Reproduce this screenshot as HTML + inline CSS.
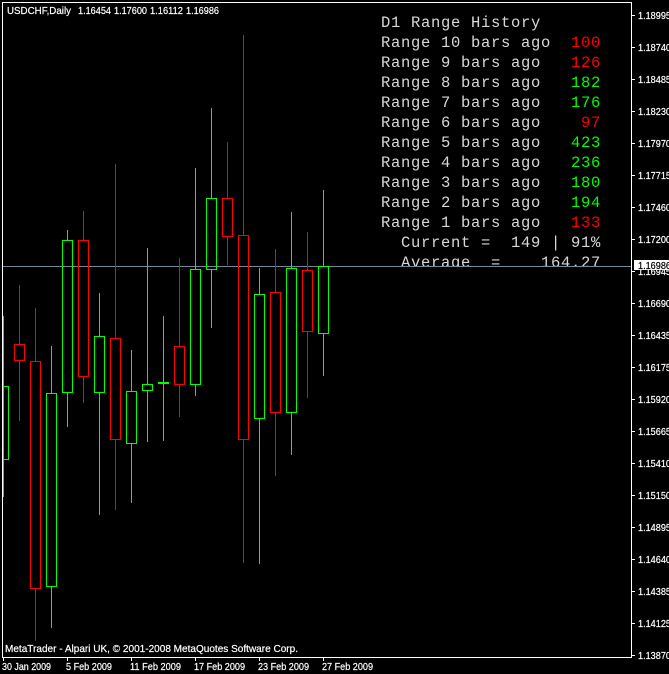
<!DOCTYPE html>
<html>
<head>
<meta charset="utf-8">
<style>
html,body{margin:0;padding:0;background:#000;width:669px;height:674px;overflow:hidden}
svg{display:block}
.s{font-family:"Liberation Sans",sans-serif;font-size:10.5px;fill:#fff;stroke:#fff;stroke-width:.2}
.m{font-family:"Liberation Mono",monospace;font-size:15.5px;letter-spacing:.7px;white-space:pre}
.o{fill:#d8d8d8}.r{fill:#ff0000}.g{fill:#00ff00}
</style>
</head>
<body>
<svg width="669" height="674" viewBox="0 0 669 674" xmlns="http://www.w3.org/2000/svg">
<defs><clipPath id="c"><rect x="0" y="0" width="631" height="266"/></clipPath></defs>
<rect width="669" height="674" fill="#000"/>

<!-- overlay text -->
<g class="m" clip-path="url(#c)">
<text class="m o" x="381" y="27" xml:space="preserve">D1 Range History</text>
<text class="m o" x="381" y="47" xml:space="preserve">Range 10 bars ago</text><text class="m r" x="571" y="47">100</text>
<text class="m o" x="381" y="67" xml:space="preserve">Range 9 bars ago</text><text class="m r" x="571" y="67">126</text>
<text class="m o" x="381" y="87" xml:space="preserve">Range 8 bars ago</text><text class="m g" x="571" y="87">182</text>
<text class="m o" x="381" y="107" xml:space="preserve">Range 7 bars ago</text><text class="m g" x="571" y="107">176</text>
<text class="m o" x="381" y="127" xml:space="preserve">Range 6 bars ago</text><text class="m r" x="581" y="127">97</text>
<text class="m o" x="381" y="147" xml:space="preserve">Range 5 bars ago</text><text class="m g" x="571" y="147">423</text>
<text class="m o" x="381" y="167" xml:space="preserve">Range 4 bars ago</text><text class="m g" x="571" y="167">236</text>
<text class="m o" x="381" y="187" xml:space="preserve">Range 3 bars ago</text><text class="m g" x="571" y="187">180</text>
<text class="m o" x="381" y="207" xml:space="preserve">Range 2 bars ago</text><text class="m g" x="571" y="207">194</text>
<text class="m o" x="381" y="227" xml:space="preserve">Range 1 bars ago</text><text class="m r" x="571" y="227">133</text>
<text class="m o" x="401" y="247" xml:space="preserve">Current =  149 | 91%</text>
<text class="m o" x="401" y="267" xml:space="preserve">Average  =    164.27</text>
</g>

<!-- price line -->
<path d="M3 266.5H631" stroke="#778899" stroke-width="1" fill="none" shape-rendering="crispEdges"/>

<!-- green candles -->
<g fill="none" stroke="#00ff00" stroke-width="1" shape-rendering="crispEdges">
<path d="M3.5 316V497"/>
<path d="M3 386.5H8.5V459.5H3"/>
<path d="M51.5 346V393M51.5 586V628"/><rect x="46.5" y="393.5" width="10" height="193"/>
<path d="M67.5 230V240M67.5 392V427"/><rect x="62.5" y="240.5" width="10" height="152"/>
<path d="M99.5 293V336M99.5 392V515"/><rect x="94.5" y="336.5" width="10" height="56"/>
<path d="M131.5 350V391M131.5 443V503"/><rect x="126.5" y="391.5" width="10" height="52"/>
<path d="M147.5 248V384M147.5 390V442"/><rect x="142.5" y="384.5" width="10" height="6"/>
<path d="M163.5 316V441M158 383.5H169M158 382.5H169"/>
<path d="M195.5 168V269M195.5 384V396"/><rect x="190.5" y="269.5" width="10" height="115"/>
<path d="M211.5 108V198M211.5 269V328"/><rect x="206.5" y="198.5" width="10" height="71"/>
<path d="M259.5 268V294M259.5 418V564"/><rect x="254.5" y="294.5" width="10" height="124"/>
<path d="M291.5 212V268M291.5 412V455"/><rect x="286.5" y="268.5" width="10" height="144"/>
<path d="M323.5 190V266M323.5 333V376"/><rect x="318.5" y="266.5" width="10" height="67"/>
</g>

<!-- red candles -->
<g fill="none" stroke="#ff0000" stroke-width="1" shape-rendering="crispEdges">
<path d="M19.5 285V344M19.5 360V421"/><rect x="14.5" y="344.5" width="10" height="16"/>
<path d="M35.5 308V361M35.5 588V641"/><rect x="30.5" y="361.5" width="10" height="227"/>
<path d="M83.5 211V240M83.5 376V403"/><rect x="78.5" y="240.5" width="10" height="136"/>
<path d="M115.5 164V338M115.5 439V510"/><rect x="110.5" y="338.5" width="10" height="101"/>
<path d="M179.5 258V346M179.5 384V417"/><rect x="174.5" y="346.5" width="10" height="38"/>
<path d="M227.5 142V198M227.5 236V265"/><rect x="222.5" y="198.5" width="10" height="38"/>
<path d="M243.5 35V235M243.5 439V563"/><rect x="238.5" y="235.5" width="10" height="204"/>
<path d="M275.5 249V292M275.5 412V476"/><rect x="270.5" y="292.5" width="10" height="120"/>
<path d="M307.5 232V270M307.5 331V398"/><rect x="302.5" y="270.5" width="10" height="61"/>
</g>

<!-- frame and ticks -->
<g fill="none" stroke="#fff" stroke-width="1" shape-rendering="crispEdges">
<path d="M2.5 2V658M2 2.5H632M631.5 2V658M2 657.5H632"/>
<path d="M632 15.5h3M632 47.5h3M632 79.5h3M632 111.5h3M632 143.5h3M632 175.5h3M632 207.5h3M632 239.5h3M632 271.5h3M632 303.5h3M632 335.5h3M632 367.5h3M632 399.5h3M632 431.5h3M632 463.5h3M632 495.5h3M632 527.5h3M632 559.5h3M632 591.5h3M632 623.5h3M632 655.5h3"/>
<path d="M3.5 658v3M67.5 658v3M131.5 658v3M195.5 658v3M259.5 658v3M323.5 658v3"/>
</g>

<!-- header -->
<text class="s" x="7" y="14" textLength="64" lengthAdjust="spacingAndGlyphs">USDCHF,Daily</text>
<text class="s" x="78" y="14" textLength="33" lengthAdjust="spacingAndGlyphs">1.16454</text>
<text class="s" x="114" y="14" textLength="33" lengthAdjust="spacingAndGlyphs">1.17600</text>
<text class="s" x="150" y="14" textLength="33" lengthAdjust="spacingAndGlyphs">1.16112</text>
<text class="s" x="186" y="14" textLength="33" lengthAdjust="spacingAndGlyphs">1.16986</text>

<text class="s" x="5" y="652" textLength="293" lengthAdjust="spacingAndGlyphs">MetaTrader - Alpari UK, © 2001-2008 MetaQuotes Software Corp.</text>

<!-- price axis -->
<g class="s">
<text x="638" y="19" textLength="33" lengthAdjust="spacingAndGlyphs">1.18995</text>
<text x="638" y="51" textLength="33" lengthAdjust="spacingAndGlyphs">1.18740</text>
<text x="638" y="83" textLength="33" lengthAdjust="spacingAndGlyphs">1.18485</text>
<text x="638" y="115" textLength="33" lengthAdjust="spacingAndGlyphs">1.18230</text>
<text x="638" y="147" textLength="33" lengthAdjust="spacingAndGlyphs">1.17970</text>
<text x="638" y="179" textLength="33" lengthAdjust="spacingAndGlyphs">1.17715</text>
<text x="638" y="211" textLength="33" lengthAdjust="spacingAndGlyphs">1.17460</text>
<text x="638" y="243" textLength="33" lengthAdjust="spacingAndGlyphs">1.17200</text>
<text x="638" y="275" textLength="33" lengthAdjust="spacingAndGlyphs">1.16945</text>
<text x="638" y="307" textLength="33" lengthAdjust="spacingAndGlyphs">1.16690</text>
<text x="638" y="339" textLength="33" lengthAdjust="spacingAndGlyphs">1.16435</text>
<text x="638" y="371" textLength="33" lengthAdjust="spacingAndGlyphs">1.16175</text>
<text x="638" y="403" textLength="33" lengthAdjust="spacingAndGlyphs">1.15920</text>
<text x="638" y="435" textLength="33" lengthAdjust="spacingAndGlyphs">1.15665</text>
<text x="638" y="467" textLength="33" lengthAdjust="spacingAndGlyphs">1.15410</text>
<text x="638" y="499" textLength="33" lengthAdjust="spacingAndGlyphs">1.15150</text>
<text x="638" y="531" textLength="33" lengthAdjust="spacingAndGlyphs">1.14895</text>
<text x="638" y="563" textLength="33" lengthAdjust="spacingAndGlyphs">1.14640</text>
<text x="638" y="595" textLength="33" lengthAdjust="spacingAndGlyphs">1.14385</text>
<text x="638" y="627" textLength="33" lengthAdjust="spacingAndGlyphs">1.14125</text>
<text x="638" y="659" textLength="33" lengthAdjust="spacingAndGlyphs">1.13870</text>
</g>

<!-- current price label -->
<rect x="634" y="260" width="35" height="10" fill="#fff"/>
<text x="638" y="269" textLength="33" lengthAdjust="spacingAndGlyphs" style="font-family:'Liberation Sans',sans-serif;font-size:10.5px;fill:#000;stroke:#000;stroke-width:.2">1.16986</text>

<!-- time axis -->
<g class="s">
<text x="2" y="670" textLength="49" lengthAdjust="spacingAndGlyphs">30 Jan 2009</text>
<text x="66" y="670" textLength="46" lengthAdjust="spacingAndGlyphs">5 Feb 2009</text>
<text x="130" y="670" textLength="51" lengthAdjust="spacingAndGlyphs">11 Feb 2009</text>
<text x="194" y="670" textLength="51" lengthAdjust="spacingAndGlyphs">17 Feb 2009</text>
<text x="258" y="670" textLength="51" lengthAdjust="spacingAndGlyphs">23 Feb 2009</text>
<text x="322" y="670" textLength="51" lengthAdjust="spacingAndGlyphs">27 Feb 2009</text>
</g>
</svg>
</body>
</html>
